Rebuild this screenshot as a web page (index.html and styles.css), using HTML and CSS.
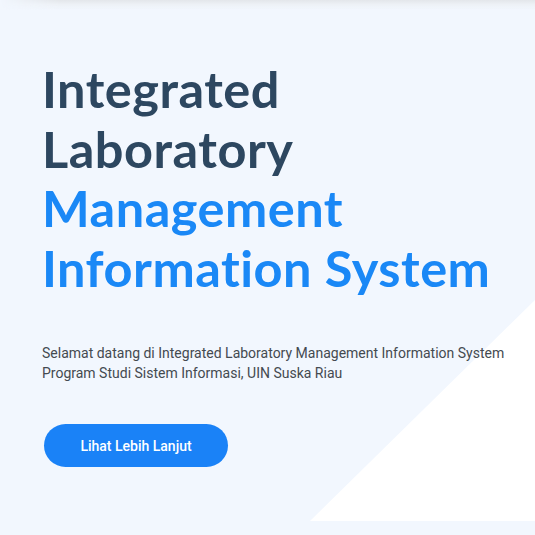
FILE: index.html
```html
<!DOCTYPE html>
<html lang="id">
<head>
<meta charset="utf-8">
<title>ILMIS</title>
<link rel="stylesheet" href="styles.css">
</head>
<body>
<div class="topbar"></div>
<section class="hero">
  <svg class="hero-bg" viewBox="0 0 535 535" preserveAspectRatio="none" aria-hidden="true">
    <polygon points="310,521 535,300 535,521" fill="#ffffff"/>
  </svg>
  <div class="hero-content">
    <h1 class="title">
      <span class="title-dark">Integrated<br>Laboratory</span><br>
      <span class="title-blue">Management<br>Information System</span>
    </h1>
    <p class="lead">Selamat datang di Integrated Laboratory Management Information System<br>Program Studi Sistem Informasi, UIN Suska Riau</p>
    <a class="btn" href="#">Lihat Lebih Lanjut</a>
  </div>
</section>
</body>
</html>
```
FILE: styles.css
```css
* { box-sizing: border-box; }
html, body { margin: 0; padding: 0; }
body {
  background: #f2f7fe;
  width: 535px;
  height: 535px;
  overflow: hidden;
  font-family: Roboto, "Liberation Sans", sans-serif;
}
.topbar {
  height: 10px;
  background: linear-gradient(to bottom, #e3e6ea 0%, #edf1f6 45%, rgba(242,247,254,0) 100%);
  -webkit-mask-image: linear-gradient(to right, transparent 0px, #000 60px);
  mask-image: linear-gradient(to right, transparent 0px, #000 60px);
}
.hero {
  position: relative;
  height: 525px;
}
.hero-bg {
  position: absolute;
  left: 0;
  top: -10px;
  width: 535px;
  height: 535px;
}
.hero-content {
  position: relative;
  padding: 49px 0 0 42px;
}
.title {
  margin: 0;
  font-family: Lato, "Open Sans", sans-serif;
  font-weight: 700;
  font-size: 50.5px;
  line-height: 59.5px;
  letter-spacing: 0.5px;
}
.title-dark { color: #2d4760; }
.title-blue { color: #1a88f6; }
.lead {
  margin: 46px 0 0;
  font-size: 14px;
  line-height: 20px;
  color: #444a50;
}
.btn {
  display: inline-flex;
  align-items: center;
  justify-content: center;
  margin: 41px 0 0 2px;
  width: 184px;
  height: 43px;
  border-radius: 22px;
  background: #1a82f7;
  color: #ffffff;
  font-size: 14px;
  font-weight: 500;
  text-decoration: none;
}
```
